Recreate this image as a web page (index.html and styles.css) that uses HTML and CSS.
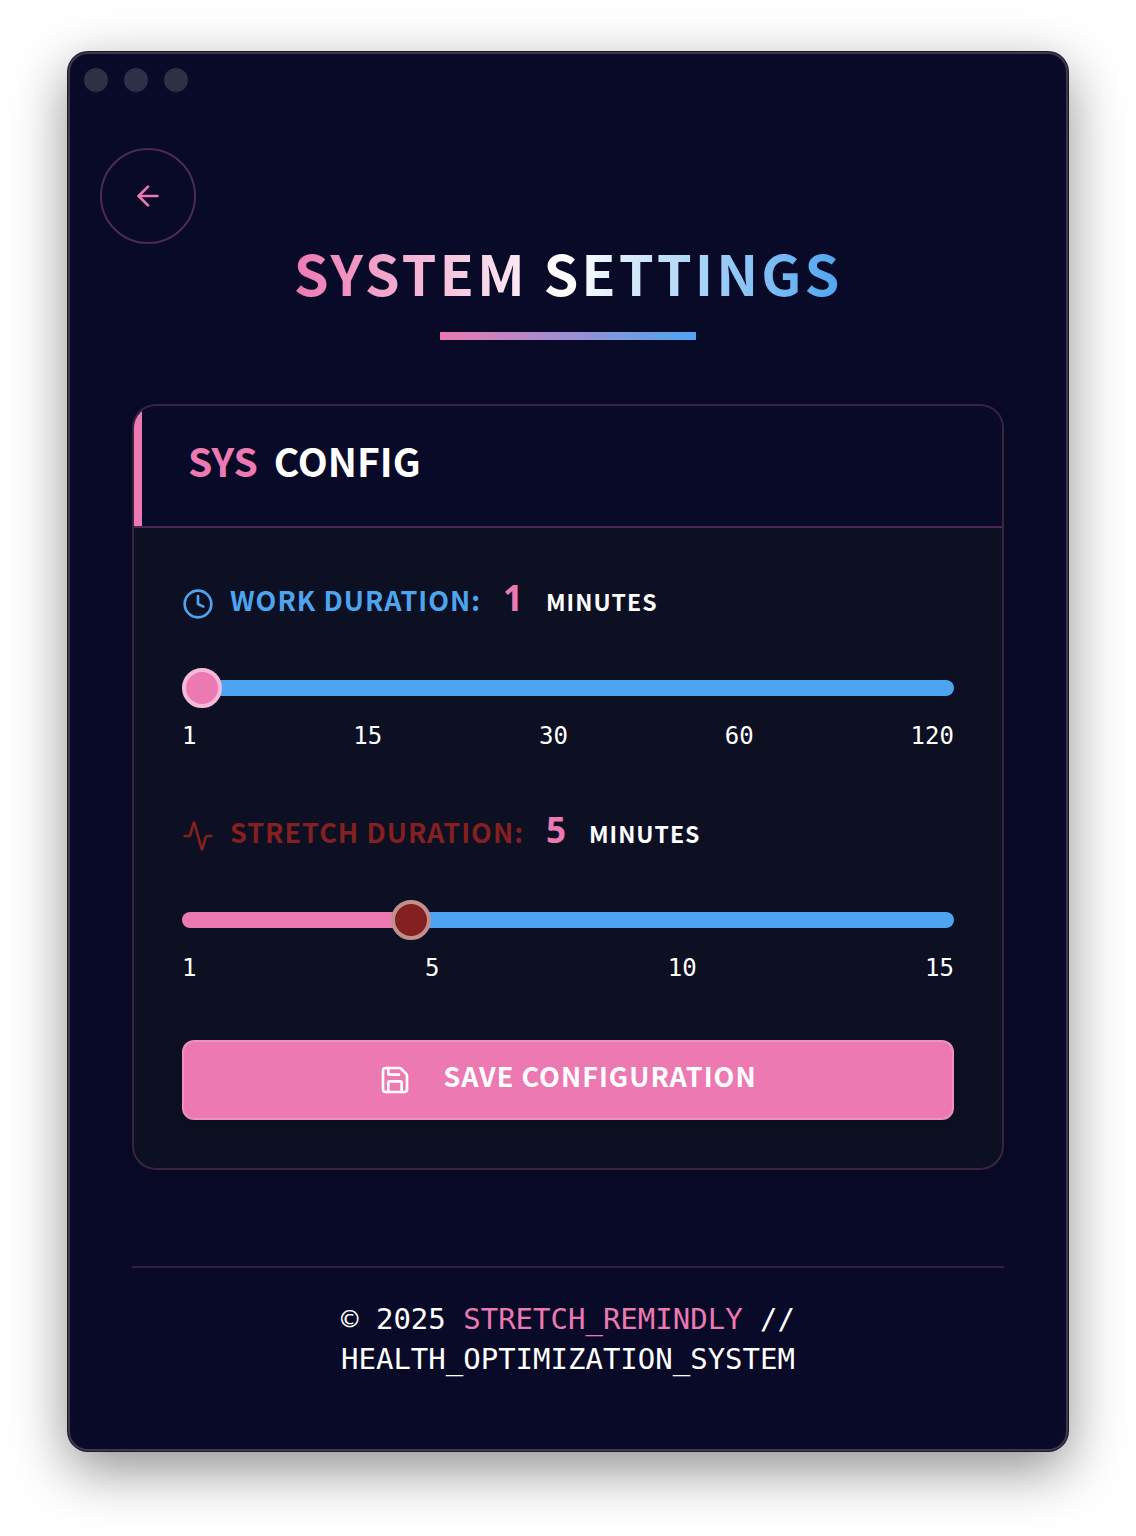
FILE: index.html
```
<!DOCTYPE html>
<html lang="en">
<head>
  <meta charset="utf-8">
  <meta name="viewport" content="width=device-width, initial-scale=1">
  <title>System Settings</title>
  <link rel="stylesheet" href="styles.css">
</head>
<body>
  <div class="window">
    <div class="titlebar">
      <span class="dot"></span>
      <span class="dot"></span>
      <span class="dot"></span>
    </div>

    <button class="back" type="button" aria-label="Back">
      <svg class="icon" viewBox="0 0 24 24" aria-hidden="true">
        <path d="m12 19-7-7 7-7"/>
        <path d="M19 12H5"/>
      </svg>
    </button>

    <main class="content">
      <h1 class="title">SYSTEM SETTINGS</h1>
      <div class="title-rule"></div>

      <form class="card">
        <h2 class="card-header"><span class="accent">SYS</span> CONFIG</h2>

        <div class="card-body">
          <div class="field">
            <label class="field-label work" for="work">
              <svg class="icon" viewBox="0 0 24 24" aria-hidden="true">
                <circle cx="12" cy="12" r="10"/>
                <path d="M12 6v6l4 2"/>
              </svg>
              <span class="field-text">
                <span>WORK DURATION:</span>
                <span class="value">1</span>
                <span class="unit">MINUTES</span>
              </span>
            </label>
            <input class="slider slider-work" id="work" type="range" min="1" max="120" value="1" style="--fill: 0%">
            <div class="ticks">
              <span>1</span><span>15</span><span>30</span><span>60</span><span>120</span>
            </div>
          </div>

          <div class="field">
            <label class="field-label stretch" for="stretch">
              <svg class="icon" viewBox="0 0 24 24" aria-hidden="true">
                <path d="M22 12h-2.48a2 2 0 0 0-1.93 1.46l-2.35 8.36a.25.25 0 0 1-.48 0L9.24 2.18a.25.25 0 0 0-.48 0l-2.35 8.36A2 2 0 0 1 4.49 12H2"/>
              </svg>
              <span class="field-text">
                <span>STRETCH DURATION:</span>
                <span class="value">5</span>
                <span class="unit">MINUTES</span>
              </span>
            </label>
            <input class="slider slider-stretch" id="stretch" type="range" min="1" max="15" value="5" style="--fill: 28.57%">
            <div class="ticks">
              <span>1</span><span>5</span><span>10</span><span>15</span>
            </div>
          </div>

          <button class="save" type="button">
            <svg class="icon" viewBox="0 0 24 24" aria-hidden="true">
              <path d="M15.2 3a2 2 0 0 1 1.4.6l3.8 3.8a2 2 0 0 1 .6 1.4V19a2 2 0 0 1-2 2H5a2 2 0 0 1-2-2V5a2 2 0 0 1 2-2z"/>
              <path d="M17 21v-7a1 1 0 0 0-1-1H8a1 1 0 0 0-1 1v7"/>
              <path d="M7 3v4a1 1 0 0 0 1 1h7"/>
            </svg>
            <span class="save-text">SAVE CONFIGURATION</span>
          </button>
        </div>
      </form>

      <footer class="footer">
        © 2025 <span class="accent">STRETCH_REMINDLY</span> //<br>
        HEALTH_OPTIMIZATION_SYSTEM
      </footer>
    </main>
  </div>
</body>
</html>
```
FILE: styles.css
```
:root {
  --bg: #090a27;
  --panel: #0d0f23;
  --pink: #ec79b2;
  --blue: #4da5ef;
  --red: #84201f;
  --sans: "Noto Sans CJK SC", "Open Sans", sans-serif;
  --mono: "DejaVu Sans Mono", "Liberation Mono", monospace;
}

* {
  box-sizing: border-box;
}

body {
  margin: 0;
  padding: 52px 68px 84px;
  background: #fff;
  color: #fff;
  font-family: var(--sans);
  font-weight: 700;
}

.window {
  padding: 16px 0 72px;
  border-radius: 20px;
  background: var(--bg);
  box-shadow:
    inset 0 0 0 2px #393952,
    0 0 0 1px #1d1d20,
    0 18px 56px rgba(0, 0, 0, 0.45);
}

.titlebar {
  display: flex;
  gap: 16px;
  padding: 0 16px;
}

.dot {
  width: 24px;
  height: 24px;
  border-radius: 50%;
  background: #2f2f48;
}

.icon {
  flex: none;
  width: 32px;
  height: 32px;
  fill: none;
  stroke: currentColor;
  stroke-width: 2;
  stroke-linecap: round;
  stroke-linejoin: round;
}

.back {
  display: flex;
  align-items: center;
  justify-content: center;
  width: 96px;
  height: 96px;
  margin: 56px 32px 0;
  padding: 0;
  border: 2px solid rgba(236, 121, 178, 0.3);
  border-radius: 50%;
  background: none;
  color: var(--pink);
}

.content {
  padding: 0 64px;
}

.title {
  width: fit-content;
  margin: 0 auto 32px;
  font-size: 56px;
  line-height: 56px;
  letter-spacing: 3px;
  background: linear-gradient(90deg, var(--pink), #fff 50%, var(--blue));
  -webkit-background-clip: text;
  background-clip: text;
  color: transparent;
}

.title-rule {
  width: 256px;
  height: 8px;
  margin: 0 auto 64px;
  background: linear-gradient(90deg, var(--pink), var(--blue));
}

.card {
  overflow: hidden;
  border: 2px solid rgba(236, 121, 178, 0.2);
  border-radius: 24px;
  background: var(--panel);
  box-shadow: 0 8px 16px rgba(0, 0, 0, 0.1);
}

.card-header {
  display: flex;
  gap: 16px;
  margin: 0;
  padding: 30px 46px 42px;
  border-left: 8px solid var(--pink);
  background: var(--bg);
  font-size: 39px;
  line-height: 48px;
}

.accent {
  color: var(--pink);
}

.card-body {
  display: flex;
  flex-direction: column;
  gap: 56px;
  padding: 46px 48px 48px;
  border-top: 2px solid #4a2851;
}

.field {
  display: flex;
  flex-direction: column;
}

.field-label {
  display: flex;
  align-items: center;
  gap: 16px;
  height: 56px;
  margin: 2px 0 36px;
  font-size: 27px;
  letter-spacing: 1px;
}

.stretch {
  margin-top: 0;
  color: var(--red);
}

.work {
  color: var(--blue);
}

.field-text {
  display: flex;
  align-items: baseline;
  gap: 22px;
  padding-bottom: 10px;
  line-height: 32px;
}

.value {
  color: var(--pink);
  font-family: "Open Sans", sans-serif;
  font-size: 35px;
}

.unit {
  color: #fff;
  font-size: 23px;
}

.slider {
  -webkit-appearance: none;
  appearance: none;
  width: 100%;
  height: 40px;
  margin: 0 0 12px;
  background: none;
}

.slider::-webkit-slider-runnable-track {
  height: 16px;
  border-radius: 8px;
  background: linear-gradient(90deg, var(--pink) var(--fill), var(--blue) var(--fill));
}

.slider::-webkit-slider-thumb {
  -webkit-appearance: none;
  width: 40px;
  height: 40px;
  margin-top: -12px;
  border: 4px solid #f7b9d7;
  border-radius: 50%;
  background: var(--pink);
}

.slider-stretch::-webkit-slider-thumb {
  border-color: #c28f8f;
  background: var(--red);
}

.ticks {
  display: flex;
  justify-content: space-between;
  font: 400 24px/32px var(--mono);
}

.save {
  display: flex;
  align-items: center;
  justify-content: center;
  gap: 32px;
  width: 100%;
  height: 80px;
  padding: 0;
  border: 2px solid #f08fc0;
  border-radius: 12px;
  background: var(--pink);
  box-shadow: 0 8px 16px rgba(0, 0, 0, 0.12);
  color: #fff;
  font: 700 27px/32px var(--sans);
  letter-spacing: 1px;
}

.save-text {
  padding-bottom: 8px;
}

.footer {
  margin-top: 96px;
  padding-top: 31px;
  border-top: 2px solid #321e42;
  font: 400 29px/40px var(--mono);
  text-align: center;
}
```
